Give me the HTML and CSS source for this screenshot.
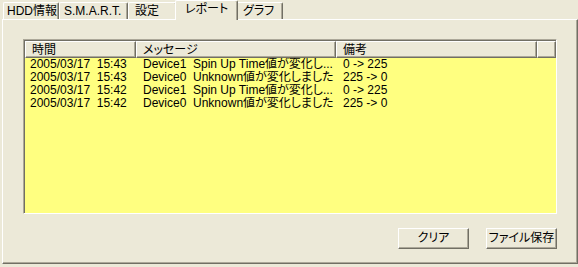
FILE: index.html
```html
<!DOCTYPE html>
<html>
<head>
  <meta charset="UTF-8">
  <title>レポート</title>
  <link rel="stylesheet" href="styles.css">
</head>
<body>
  <div class="tabs">
    <div class="tab tab-hdd">HDD情報</div>
    <div class="tab tab-smart">S.M.A.R.T.</div>
    <div class="tab tab-conf">設定</div>
    <div class="tab tab-report selected">レポート</div>
    <div class="tab tab-graph">グラフ</div>
  </div>
  <div class="panel">
    <div class="list">
      <div class="list-head">
        <div class="col col-time">時間</div>
        <div class="col col-msg">メッセージ</div>
        <div class="col col-note">備考</div>
        <div class="col col-rest"></div>
      </div>
      <div class="list-body">
        <div class="row"><span class="col-time">2005/03/17  15:43</span><span class="col-msg">Device1  Spin Up Time値が変化し...</span><span class="col-note">0 -&gt; 225</span></div>
        <div class="row"><span class="col-time">2005/03/17  15:43</span><span class="col-msg">Device0  Unknown値が変化しました</span><span class="col-note">225 -&gt; 0</span></div>
        <div class="row"><span class="col-time">2005/03/17  15:42</span><span class="col-msg">Device1  Spin Up Time値が変化し...</span><span class="col-note">0 -&gt; 225</span></div>
        <div class="row"><span class="col-time">2005/03/17  15:42</span><span class="col-msg">Device0  Unknown値が変化しました</span><span class="col-note">225 -&gt; 0</span></div>
      </div>
    </div>
    <div class="buttons">
      <button class="btn btn-clear">クリア</button>
      <button class="btn btn-save">ファイル保存</button>
    </div>
  </div>
</body>
</html>
```

FILE: styles.css
```css
* {
  box-sizing: border-box;
}
html, body {
  margin: 0;
  width: 578px;
  height: 267px;
  overflow: hidden;
}
body {
  background: #ECE9D8;
  color: #000;
  font-family: "Liberation Sans", "Noto Sans CJK JP", sans-serif;
  font-feature-settings: "palt";
  font-size: 12px;
  line-height: 13px;
}

/* tabs */
.tabs {
  display: flex;
  align-items: flex-end;
  height: 19px;
  padding-left: 3px;
}
.tab {
  height: 17px;
  padding: 2px 0 0 6px;
  border: 1px solid #fff;
  border-right: 1px solid #716F64;
  border-bottom: none;
  border-radius: 2px 2px 0 0;
  box-shadow: inset -1px 0 0 #ACA899;
  white-space: nowrap;
}
.tab-hdd { width: 56px; padding-left: 3px; }
.tab-smart { width: 69px; padding-left: 4px; }
.tab-conf { width: 49px; }
.tab-graph { width: 47px; }
.tab.selected {
  position: relative;
  z-index: 1;
  width: 63px;
  height: 20px;
  margin: 0 -2px -1px;
  padding: 2px 0 0 9px;
  background: #ECE9D8;
}

/* panel */
.panel {
  display: flex;
  flex-direction: column;
  margin: 0 0 0 2px;
  width: 576px;
  height: 245px;
  padding: 19px 20px 0 20px;
  border: 1px solid #fff;
  border-right-color: #716F64;
  border-bottom-color: #716F64;
  box-shadow: inset -1px -1px 0 #ACA899;
}

/* list view */
.list {
  display: flex;
  flex-direction: column;
  width: 534px;
  height: 175px;
  border: 1px solid;
  border-color: #ACA899 #fff #fff #ACA899;
  box-shadow: inset 1px 1px 0 #716F64;
  padding: 1px 0 0 1px;
  background: #FFFF80;
}
.list-head {
  display: flex;
  height: 17px;
  background: #ECE9D8;
}
.list-head .col {
  height: 17px;
  padding: 2px 0 0 6px;
  border: 1px solid #fff;
  border-right-color: #716F64;
  border-bottom-color: #716F64;
  box-shadow: inset -1px -1px 0 #ACA899;
}
.list-head .col-time { width: 111px; }
.list-head .col-msg { width: 200px; }
.list-head .col-note { width: 201px; }
.list-head .col-rest { flex: 1; }

.row {
  display: flex;
  height: 13px;
  white-space: pre;
}
.row span {
  overflow: hidden;
  padding-left: 5px;
}
.row .col-time { width: 111px; }
.row .col-msg { width: 200px; padding-left: 7px; }
.row .col-note { width: 201px; padding-left: 7px; }

/* buttons */
.buttons {
  display: flex;
  justify-content: flex-end;
  gap: 17px;
  margin-top: 14px;
  width: 534px;
}
.btn {
  width: 71px;
  height: 21px;
  padding: 0;
  font: inherit;
  font-feature-settings: "palt";
  white-space: nowrap;
  color: #000;
  background: #ECE9D8;
  border: 1px solid #fff;
  border-right-color: #716F64;
  border-bottom-color: #716F64;
  box-shadow: inset -1px -1px 0 #ACA899;
  border-radius: 0;
}
```
